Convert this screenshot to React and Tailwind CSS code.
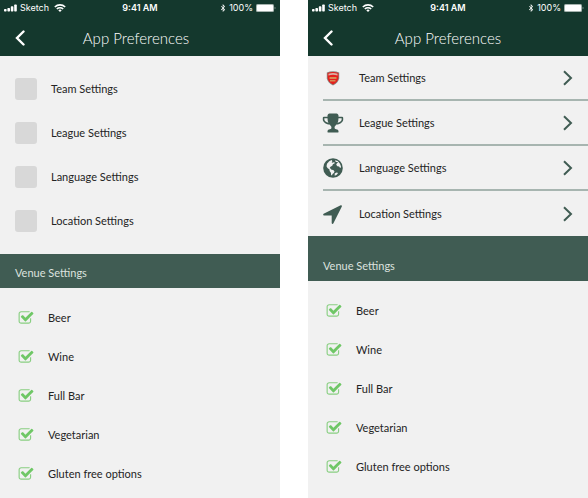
import { FaBluetoothB } from "react-icons/fa";

const preferences = ["Team Settings", "League Settings", "Language Settings", "Location Settings"];
const venues = ["Beer", "Wine", "Full Bar", "Vegetarian", "Gluten free options"];

function StatusBar() {
  return (
    <div className="grid h-4 grid-cols-3 items-center px-1 font-['Inter',sans-serif] text-[9px] leading-4 text-white">
      <div className="flex items-center gap-[3px]">
        <svg className="h-2 w-[13px]" viewBox="0 0 13 8" fill="currentColor" aria-hidden="true">
          <rect x="0" y="5" width="2.6" height="2.5" rx=".7" />
          <rect x="3.4" y="4" width="2.6" height="3.5" rx=".7" />
          <rect x="6.8" y="2.3" width="2.6" height="5.2" rx=".7" />
          <rect x="10.2" y="0.5" width="2.6" height="7" rx=".7" />
        </svg>
        <span>Sketch</span>
        <svg className="ml-[2px] h-2 w-3" viewBox="0 0 12 8" fill="none" stroke="currentColor" strokeWidth="1.6" aria-hidden="true">
          <path d="M.8 3C3.8.2 8.2.2 11.2 3M2.8 5c1.8-1.6 4.6-1.6 6.4 0" />
          <path d="M4.3 6.2c.9-.8 2.5-.8 3.4 0L6 8z" fill="currentColor" stroke="none" />
        </svg>
      </div>
      <span className="text-center font-semibold">9:41 AM</span>
      <div className="flex items-center justify-end gap-[2px]">
        <FaBluetoothB className="h-2 w-2" aria-hidden="true" />
        <span>100%</span>
        <svg className="h-2 w-[21px]" viewBox="0 0 21 8" aria-hidden="true">
          <rect x="1" y="0" width="18" height="8" rx="1.5" fill="#a4b2ad" />
          <rect x="2" y="1" width="16" height="6" rx=".7" fill="white" />
          <path d="M19.7 2.8c1 .2 1 2.2 0 2.4z" fill="#a4b2ad" />
        </svg>
      </div>
    </div>
  );
}

function Header({ titleClass = "" }) {
  return (
    <header className="bg-[#14382d] text-white">
      <StatusBar />
      <div className="grid h-10 grid-cols-[40px_1fr_40px] items-center pt-1">
        <button type="button" aria-label="Back" className="flex h-8 items-center justify-center">
          <svg className="h-4 w-3" viewBox="0 0 12 16" fill="none" stroke="currentColor" strokeWidth="2.4" strokeLinecap="round" aria-hidden="true">
            <path d="M9.5 1.5 3 8l6.5 6.5" />
          </svg>
        </button>
        <h1 className={`text-center text-[15px] leading-5 font-light text-white ${titleClass}`}>App Preferences</h1>
      </div>
    </header>
  );
}

function CrestIcon() {
  return (
    <svg className="h-4 w-4 shrink-0" viewBox="0 0 16 16" aria-hidden="true">
      <path d="M1.8 2.5Q8-.2 14.2 2.5v5.7Q13.6 12.7 8 15.6 2.4 12.7 1.8 8.2z" fill="#8b8580" />
      <path d="M2.6 3.1Q8 .9 13.4 3.1v5Q12.9 12.1 8 14.6 3.1 12.1 2.6 8.1z" fill="#e5201d" />
      <path d="M3.5 3.7Q8 2.4 12.5 3.7v1.7Q8 4.2 3.5 5.4z" fill="#d9b1a5" />
      <path d="M4.5 7h7v2h-7zM5 10h5.5v1.4H5z" fill="#d68b55" />
    </svg>
  );
}

function TrophyIcon() {
  return (
    <svg className="h-[22px] w-[22px] shrink-0" viewBox="0 0 1792 1792" fill="currentColor" aria-hidden="true">
      <path d="M522 883q-74-162-74-371h-256v96q0 78 94.5 162t235.5 113zm1078-275v-96h-256q0 209-74 371 141-29 235.5-113t94.5-162zm128-128v128q0 71-41.5 143t-112 130-173 97.5-215.5 44.5q-42 54-95 95-38 34-52.5 72.5t-14.5 89.5q0 54 30.5 91t97.5 37q75 0 133.5 45.5t58.5 114.5v64q0 14-9 23t-23 9h-832q-14 0-23-9t-9-23v-64q0-69 58.5-114.5t133.5-45.5q67 0 97.5-37t30.5-91q0-51-14.5-89.5t-52.5-72.5q-53-41-95-95-113-5-215.5-44.5t-173-97.5-112-130-41.5-143v-128q0-40 28-68t68-28h288v-96q0-66 47-113t113-47h576q66 0 113 47t47 113v96h288q40 0 68 28t28 68z" />
    </svg>
  );
}

function GlobeIcon() {
  return (
    <svg className="h-5 w-5 shrink-0" viewBox="0 0 20 20" aria-hidden="true">
      <circle cx="10" cy="10" r="9.8" fill="#405c53" />
      <path d="M6.2 3.2 8.6 2l.8 1.2-.8 1 1 .5 1.6-.6.6 1.2-1.9 1-.6 1.5-1.8.9-.8 1.2 1 .8.8 1.1 1.8.3 1.2 1.3-.6 1.6-1.4.9-.5 1.5-.9-.5-.2-2.2-1.3-1.7-.1-1.4-2-1.5-1-1.9.5-2.5z" fill="#f1f1f1" />
      <path d="m12 2.2 2.7.9 2.3 2.7 1 2.6-.3 1.6-1-.5-.6-1.1-1.7-.2-1.2-1.5.7-1.4 1-.5-.4-.8-1.7.1z" fill="#f1f1f1" />
      <path d="m11.7 15.5 1.9-1 1.5.5-1.6 1.9-1.8.9z" fill="#f1f1f1" />
    </svg>
  );
}

function LocationIcon() {
  return (
    <svg className="h-5 w-5 shrink-0" viewBox="180 170 1500 1500" fill="currentColor" aria-hidden="true">
      <path d="M1593 349l-640 1280q-17 35-57 35-5 0-15-2-22-5-35.5-22.5t-13.5-39.5v-576h-576q-22 0-39.5-13.5t-22.5-35.5 4-42 29-30l1280-640q13-7 29-7 27 0 45 19 15 14 18.5 34.5t-6.5 39.5z" />
    </svg>
  );
}

const icons = [CrestIcon, TrophyIcon, GlobeIcon, LocationIcon];

function VenueList({ id }) {
  return (
    <ul className="pl-[18px]">
      {venues.map((venue) => {
        const inputId = `${id}-${venue.toLowerCase().replaceAll(" ", "-")}`;
        return (
          <li key={venue} className="flex h-[39px] items-center">
            <span className="relative h-4 w-[30px]">
              <input id={inputId} type="checkbox" defaultChecked className="peer absolute inset-0 h-4 w-4 appearance-none" />
              <svg className="pointer-events-none absolute inset-0 hidden h-4 w-4 peer-checked:block" viewBox="0 0 1792 1792" fill="#6fc766" aria-hidden="true">
                <path opacity=".8" d="M1472 930v318q0 119-84.5 203.5t-203.5 84.5h-832q-119 0-203.5-84.5t-84.5-203.5v-832q0-119 84.5-203.5t203.5-84.5h832q63 0 117 25 15 7 18 23 3 17-9 29l-49 49q-10 10-23 10-3 0-9-2-23-6-45-6h-832q-66 0-113 47t-47 113v832q0 66 47 113t113 47h832q66 0 113-47t47-113v-254q0-13 9-22l64-64q10-10 23-10 6 0 12 3 20 8 20 29z" />
                <path d="M1703 441l-814 814q-24 24-57 24t-57-24l-430-430q-24-24-24-57t24-57l110-110q24-24 57-24t57 24l263 263 647-647q24-24 57-24t57 24l110 110q24 24 24 57t-24 57z" />
              </svg>
            </span>
            <label htmlFor={inputId}>{venue}</label>
          </li>
        );
      })}
    </ul>
  );
}

export default function App() {
  return (
    <main className="grid min-h-screen grid-cols-2 gap-7 bg-white font-['Lato',sans-serif] text-[11px] leading-4 text-[#242424]">
      <section className="bg-[#f1f1f1]">
        <Header titleClass="pr-2" />
        <ul className="pt-[11px] pb-[11px] pl-[15px]">
          {preferences.map((name) => (
            <li key={name} className="h-11">
              <label className="flex h-11 items-center gap-[14px]">
                <input type="checkbox" className="h-[22px] w-[22px] appearance-none rounded-[3px] bg-[#d8d8d8]" />
                {name}
              </label>
            </li>
          ))}
        </ul>
        <h2 className="flex h-[34px] items-center bg-[#405c53] px-[15px] pt-[3px] text-[#dce2df]">Venue Settings</h2>
        <div className="pt-[10px]"><VenueList id="first" /></div>
      </section>
      <section className="bg-[#f1f1f1]">
        <Header />
        <nav className="pl-[15px]">
          {preferences.map((name, i) => {
            const Icon = icons[i];
            return (
              <a key={name} href="#" className="flex h-[45px] items-center border-b-2 border-[#a7b5b0] pr-[14px] last:border-b-0">
                <span className="flex w-9 text-[#405c53]">
                  <span className="flex w-5 justify-center"><Icon /></span>
                </span>
                <span className="flex-1">{name}</span>
                <svg className="h-4 w-3" viewBox="0 0 12 16" fill="none" stroke="#405c53" strokeWidth="2" aria-hidden="true">
                  <path d="m2 1.2 7 6.8-7 6.8" />
                </svg>
              </a>
            );
          })}
        </nav>
        <h2 className="flex h-[45px] items-end bg-[#405c53] px-[15px] pb-[7px] text-[#dce2df]">Venue Settings</h2>
        <div className="pt-[10px]"><VenueList id="second" /></div>
      </section>
    </main>
  );
}
